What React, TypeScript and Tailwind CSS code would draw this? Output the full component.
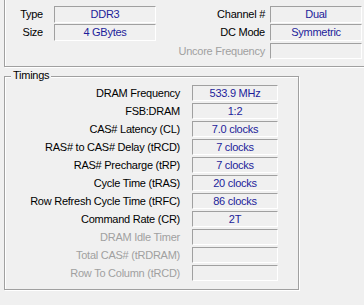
const FONT = "font-['Liberation_Sans',Arial,sans-serif] text-[11px] tracking-[-0.25px]"

const timings = [
  { label: 'DRAM Frequency', value: '533.9 MHz' },
  { label: 'FSB:DRAM', value: '1:2' },
  { label: 'CAS# Latency (CL)', value: '7.0 clocks' },
  { label: 'RAS# to CAS# Delay (tRCD)', value: '7 clocks' },
  { label: 'RAS# Precharge (tRP)', value: '7 clocks' },
  { label: 'Cycle Time (tRAS)', value: '20 clocks' },
  { label: 'Row Refresh Cycle Time (tRFC)', value: '86 clocks' },
  { label: 'Command Rate (CR)', value: '2T' },
  { label: 'DRAM Idle Timer', value: '', disabled: true },
  { label: 'Total CAS# (tRDRAM)', value: '', disabled: true },
  { label: 'Row To Column (tRCD)', value: '', disabled: true },
]

function ValueBox({ value, className }: { value?: string; className: string }) {
  return (
    <div
      className={`flex items-center justify-center border-t border-l border-t-[#a0a0a0] border-l-[#a0a0a0] border-b border-r border-b-white border-r-white text-[#1c1c9a] leading-none ${className}`}
    >
      {value}
    </div>
  )
}

export default function App() {
  return (
    <div className={`w-[364px] h-[305px] overflow-hidden bg-[#f0f0f0] text-black ${FONT}`}>
      {/* General */}
      <div className="relative mt-[-3px] ml-[4px] w-[370px] h-[70px] border border-[#a0a0a0] shadow-[inset_1px_1px_0_#fff,1px_1px_0_#fff] pt-[8px]">
        <span className="absolute top-[-8px] left-[6px] px-[2px] bg-[#f0f0f0] leading-[13px]">General</span>
        <div className="flex flex-col">
          <div className="flex h-[17px] items-center">
            <div className="w-[38px] text-right">Type</div>
            <ValueBox value="DDR3" className="ml-[11px] w-[102px] h-[17px]" />
            <div className="w-[109px] text-right">Channel #</div>
            <ValueBox value="Dual" className="ml-[5px] w-[92px] h-[17px]" />
          </div>
          <div className="flex h-[17px] items-center mt-[1px]">
            <div className="w-[38px] text-right">Size</div>
            <ValueBox value="4 GBytes" className="ml-[11px] w-[102px] h-[17px]" />
            <div className="w-[109px] text-right">DC Mode</div>
            <ValueBox value="Symmetric" className="ml-[5px] w-[92px] h-[17px]" />
          </div>
          <div className="flex h-[16px] items-center mt-[2px]">
            <div className="ml-[151px] w-[109px] text-right text-[#a0a0a0] whitespace-nowrap">Uncore Frequency</div>
            <ValueBox className="ml-[5px] w-[92px] h-[16px]" />
          </div>
        </div>
      </div>

      {/* Timings */}
      <div className="relative mt-[9px] ml-[4px] w-[295px] h-[214px] border border-[#a0a0a0] shadow-[inset_1px_1px_0_#fff,1px_1px_0_#fff] pt-[8px]">
        <span className="absolute top-[-8px] left-[6px] px-[2px] bg-[#f0f0f0] leading-[13px]">Timings</span>
        <div className="flex flex-col gap-[2px]">
          {timings.map((t) => (
            <div key={t.label} className="flex h-[16px] items-center">
              <div className={`w-[175px] text-right whitespace-nowrap ${t.disabled ? 'text-[#a0a0a0]' : ''}`}>
                {t.label}
              </div>
              <ValueBox value={t.value} className="ml-[12px] w-[86px] h-[16px]" />
            </div>
          ))}
        </div>
      </div>
    </div>
  )
}
